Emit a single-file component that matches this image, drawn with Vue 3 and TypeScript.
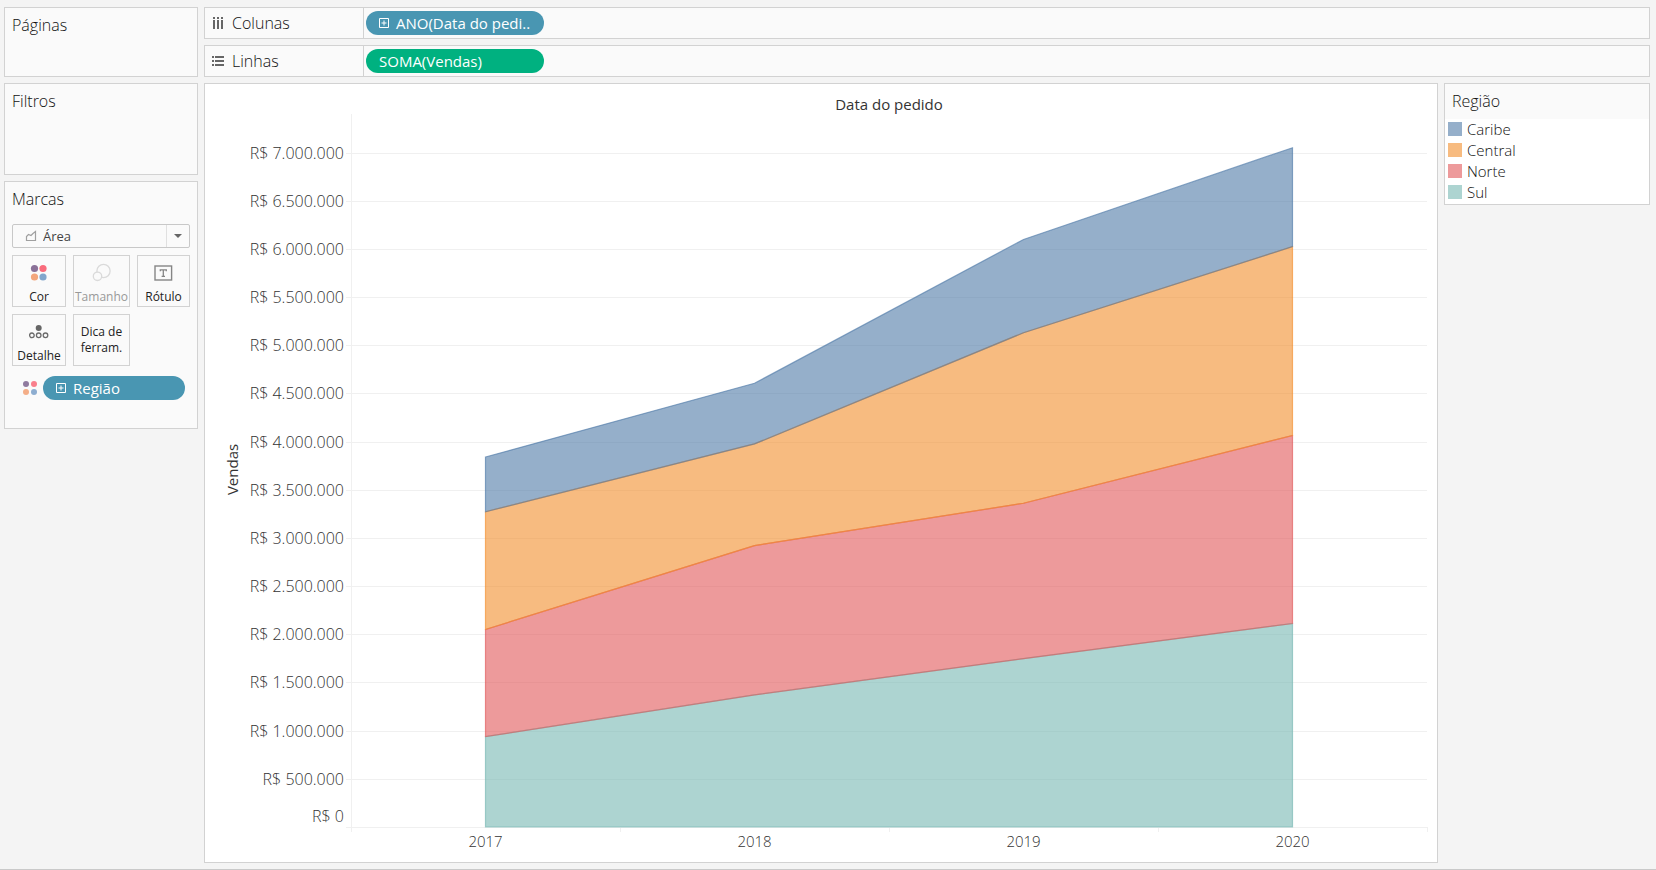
<script setup lang="ts">
import { computed, onBeforeUnmount, onMounted, ref } from 'vue'

interface Series {
  name: string
  color: string
  values: number[]
}

// Sales in millions of R$, listed from the top of the stack to the bottom
const years = [2017, 2018, 2019, 2020]
const series: Series[] = [
  { name: 'Caribe', color: '#4e79a7', values: [0.568, 0.629, 0.968, 1.027] },
  { name: 'Central', color: '#f28e2b', values: [1.222, 1.056, 1.77, 1.96] },
  { name: 'Norte', color: '#e15759', values: [1.112, 1.548, 1.613, 1.951] },
  { name: 'Sul', color: '#76b7b2', values: [0.938, 1.372, 1.747, 2.112] },
]

const chart = ref<HTMLElement | null>(null)
const width = ref(1232)
const height = ref(778)
let observer: ResizeObserver | undefined

function measure() {
  if (!chart.value) return
  width.value = chart.value.clientWidth
  height.value = chart.value.clientHeight
}

onMounted(() => {
  measure()
  observer = new ResizeObserver(measure)
  if (chart.value) observer.observe(chart.value)
})
onBeforeUnmount(() => observer?.disconnect())

const left = 146
const top = 30
const right = computed(() => width.value - 10)
const bottom = computed(() => height.value - 35)
const step = computed(() => (right.value - left) / years.length)

const domainMax = 7.4
const y = (v: number) => bottom.value - (v / domainMax) * (bottom.value - top)
const x = (i: number) => left + step.value * (i + 0.5)
const crisp = (v: number) => Math.round(v) + 0.5

const ticks = Array.from({ length: 15 }, (_, i) => i * 0.5)
const money = (v: number) =>
  'R$ ' + String(Math.round(v * 1e6)).replace(/\B(?=(\d{3})+(?!\d))/g, '.')

const areas = computed(() =>
  series.map((s, k) => {
    const below = years.map((_, i) => series.slice(k + 1).reduce((a, b) => a + b.values[i], 0))
    const upper = years.map((_, i) => `${x(i)},${y(below[i] + s.values[i])}`)
    const lower = years.map((_, i) => `${x(i)},${y(below[i])}`).reverse()
    return { ...s, points: [...upper, ...lower].join(' ') }
  }),
)
// Outlines are painted bottom-up so that each upper series owns its lower edge
const outlines = computed(() => [...areas.value].reverse())
const yAxisTitle = computed(() => `translate(33 ${(top + bottom.value) / 2 - 1}) rotate(-90)`)
</script>

<template>
  <div class="page">
    <aside class="side">
      <section class="card pages"><h2>Páginas</h2></section>
      <section class="card filters"><h2>Filtros</h2></section>
      <section class="card marks">
        <h2>Marcas</h2>
        <div class="mark-type">
          <svg class="area-icon" width="12" height="12" viewBox="0 0 12 12" aria-hidden="true">
            <path d="M1.5 10.5V6.5L3.5 4.5L6 5.5L8 3.5L10.5 1.5V10.5Z" fill="none" stroke="#a0a0a0" stroke-width="1.2" />
          </svg>
          <select aria-label="Tipo de marca"><option>Área</option></select>
          <span class="caret" aria-hidden="true"></span>
        </div>
        <div class="buttons">
          <button type="button">
            <svg width="20" height="20" viewBox="0 0 20 20" aria-hidden="true">
              <circle cx="5.5" cy="5.5" r="3.6" fill="#8a7198" /><circle cx="14" cy="5.5" r="3.6" fill="#f96c7c" />
              <circle cx="5.5" cy="14" r="3.6" fill="#f3a67c" /><circle cx="14" cy="14" r="3.6" fill="#82a6cc" />
            </svg>
            <span>Cor</span>
          </button>
          <button type="button" class="off" disabled>
            <svg width="20" height="20" viewBox="0 0 20 20" fill="#fafafa" stroke="#dadada" stroke-width="1.3" aria-hidden="true">
              <circle cx="11.5" cy="8" r="6.6" /><circle cx="5.5" cy="13.3" r="4.2" />
            </svg>
            <span>Tamanho</span>
          </button>
          <button type="button">
            <svg width="20" height="20" viewBox="0 0 20 20" fill="none" stroke="#858585" aria-hidden="true">
              <rect x="1" y="3" width="16.6" height="14" stroke-width="1.4" />
              <path d="M6.3 8.2V6.8H12.3V8.2M9.3 6.8V13.4M7.6 13.4H11" stroke-width="1.3" />
            </svg>
            <span>Rótulo</span>
          </button>
          <button type="button">
            <svg width="20" height="20" viewBox="0 0 20 20" fill="none" stroke="#6b6b6b" stroke-width="1.3" aria-hidden="true">
              <circle cx="9.7" cy="6" r="3" fill="#666" stroke="none" />
              <circle cx="2.9" cy="13.3" r="2.3" /><circle cx="9.7" cy="13.3" r="2.3" /><circle cx="16.5" cy="13.3" r="2.3" />
            </svg>
            <span>Detalhe</span>
          </button>
          <button type="button" class="tip">Dica de ferram.</button>
        </div>
        <div class="encoding">
          <svg width="14" height="14" viewBox="0 0 14 14" aria-hidden="true">
            <circle cx="3" cy="3" r="3" fill="#907b9f" /><circle cx="11" cy="3" r="3" fill="#f97f8c" />
            <circle cx="3" cy="11" r="3" fill="#f4ae88" /><circle cx="11" cy="11" r="3" fill="#8dadd0" />
          </svg>
          <button type="button" class="pill blue">
            <svg width="10" height="10" viewBox="0 0 10 10" fill="none" stroke="#fff" aria-hidden="true">
              <path d="M.5 .5H9.5V9.5H.5ZM2.5 5H7.5M5 2.5V7.5" />
            </svg>
            <span>Região</span>
          </button>
        </div>
      </section>
    </aside>

    <main class="main">
      <section class="card shelf">
        <h2>
          <svg width="12" height="12" viewBox="0 0 12 12" fill="#666" aria-hidden="true">
            <path d="M1 0h2v2H1zM5 0h2v2H5zM9 0h2v2H9zM1 3h2v9H1zM5 3h2v9H5zM9 3h2v9H9z" />
          </svg>
          Colunas
        </h2>
        <button type="button" class="pill blue">
          <svg width="10" height="10" viewBox="0 0 10 10" fill="none" stroke="#fff" aria-hidden="true">
            <path d="M.5 .5H9.5V9.5H.5ZM2.5 5H7.5M5 2.5V7.5" />
          </svg>
          <span>ANO(Data do pedi..</span>
        </button>
      </section>
      <section class="card shelf">
        <h2>
          <svg width="12" height="12" viewBox="0 0 12 12" fill="#666" aria-hidden="true">
            <path d="M0 1h2v2H0zM0 5h2v2H0zM0 9h2v2H0zM3 1h9v2H3zM3 5h9v2H3zM3 9h9v2H3z" />
          </svg>
          Linhas
        </h2>
        <button type="button" class="pill green"><span>SOMA(Vendas)</span></button>
      </section>

      <div class="work">
        <section ref="chart" class="viz">
          <svg class="chart" :width="width" :height="height" role="img" aria-label="Vendas por data do pedido e região">
            <text class="title" text-anchor="middle" :x="(left + right) / 2" y="26">Data do pedido</text>
            <text class="title" :transform="yAxisTitle" text-anchor="middle">Vendas</text>
            <g class="grid">
              <line v-for="t in ticks" :key="t" :x1="left - 5" :x2="right" :y1="crisp(y(t))" :y2="crisp(y(t))" />
              <line :x1="left + 0.5" :x2="left + 0.5" :y1="top" :y2="bottom" />
              <line
                v-for="i in 5" :key="i" :x1="crisp(left + step * (i - 1))" :x2="crisp(left + step * (i - 1))"
                :y1="bottom" :y2="bottom + 5"
              />
            </g>
            <polygon v-for="a in areas" :key="a.name" :points="a.points" :fill="a.color" fill-opacity="0.6" />
            <polygon
              v-for="a in outlines" :key="a.name" :points="a.points" fill="none"
              :stroke="a.color" stroke-opacity="0.65" stroke-width="1.2"
            />
            <text
              v-for="t in ticks" :key="t" class="label amount" text-anchor="end" :x="left - 7"
              :y="Math.round(y(t)) + (t === 0 ? -5 : 6)"
            >{{ money(t) }}</text>
            <text
              v-for="(year, i) in years" :key="year" class="label" text-anchor="middle" :x="x(i)" :y="bottom + 20"
            >{{ year }}</text>
          </svg>
        </section>
        <aside class="card legend">
          <h2>Região</h2>
          <ul>
            <li v-for="s in series" :key="s.name">
              <i :style="{ background: s.color }"></i>{{ s.name }}
            </li>
          </ul>
        </aside>
      </div>
    </main>
  </div>
</template>

<style>
body {
  margin: 0;
  background: #f4f4f4;
}
</style>

<style scoped>
.page {
  box-sizing: border-box;
  display: flex;
  gap: 6px;
  min-height: 100vh;
  padding: 7px 6px 6px 4px;
  border-bottom: 1px solid #c9c9c9;
  background: #f4f4f4;
  color: #111;
  font: 300 15px/20px "Open Sans", "Noto Sans", sans-serif;
}
.page * {
  box-sizing: border-box;
}
h2 {
  margin: 0;
  font: inherit;
  font-size: 16px;
}
button {
  margin: 0;
  padding: 0;
  border: 0;
  font: inherit;
  color: inherit;
}
.card {
  border: 1px solid #d2d2d2;
  background: #fafafa;
}
.side {
  display: flex;
  flex: none;
  flex-direction: column;
  gap: 6px;
  width: 194px;
}
.side .card {
  padding: 7px;
}
.pages {
  min-height: 70px;
}
.filters {
  min-height: 92px;
}
.marks {
  min-height: 248px;
}
.mark-type {
  display: flex;
  align-items: center;
  position: relative;
  height: 24px;
  margin-top: 15px;
  border: 1px solid #c8c8c8;
  border-radius: 2px;
}
.area-icon {
  position: absolute;
  left: 12px;
  pointer-events: none;
}
select {
  flex: 1;
  height: 22px;
  padding: 0 30px;
  border: 0;
  background: transparent;
  color: #444;
  font: 400 13px/20px "Open Sans", "Noto Sans", sans-serif;
  appearance: none;
}
.caret {
  position: absolute;
  right: 0;
  display: grid;
  place-items: center;
  width: 23px;
  height: 22px;
  border-left: 1px solid #e0e0e0;
  pointer-events: none;
}
.caret::before {
  content: "";
  border: 4px solid transparent;
  border-top-color: #666;
  border-bottom: 0;
}
.buttons {
  display: grid;
  grid-template-columns: 54fr 57fr 53fr;
  gap: 7px;
  margin-top: 7px;
}
.buttons button {
  display: flex;
  flex-direction: column;
  align-items: center;
  justify-content: space-between;
  min-width: 0;
  height: 52px;
  padding: 7px 0 1px;
  border: 1px solid #d2d2d2;
  background: #fafafa;
  color: #222;
  font-size: 12px;
  font-weight: 400;
  line-height: 16px;
}
.buttons .off {
  color: #999;
}
.buttons .tip {
  justify-content: center;
  padding: 0 7px;
}
.encoding {
  display: flex;
  align-items: center;
  gap: 6px;
  margin-top: 10px;
  padding: 0 5px 0 11px;
}
.encoding .pill {
  flex: 1;
}
.pill {
  display: flex;
  align-items: center;
  gap: 7px;
  height: 24px;
  padding: 0 13px;
  border-radius: 12px;
  color: #fff;
  font-weight: 500;
  white-space: nowrap;
}
.blue {
  background: #4996b2;
}
.green {
  background: #00b180;
}
.main {
  display: flex;
  flex: 1;
  flex-direction: column;
  gap: 6px;
  min-width: 0;
}
.shelf {
  display: flex;
  align-items: center;
  height: 32px;
}
.shelf h2 {
  display: flex;
  align-items: center;
  gap: 8px;
  width: 159px;
  height: 30px;
  padding-left: 7px;
  border-right: 1px solid #d2d2d2;
}
.shelf .pill {
  width: 178px;
  margin-left: 2px;
}
.work {
  display: flex;
  flex: 1;
  align-items: flex-start;
  gap: 6px;
}
.viz {
  flex: 1;
  align-self: stretch;
  min-width: 0;
  overflow: hidden;
  border: 1px solid #d2d2d2;
  background: #fff;
}
.chart {
  display: block;
}
.grid {
  stroke: #f0f0f0;
}
.title {
  fill: #333;
  font-weight: 500;
}
.label {
  fill: #333;
}
.amount {
  font-size: 16px;
}
.legend {
  flex: none;
  width: 206px;
}
.legend h2 {
  padding: 7px 7px 8px;
}
ul {
  margin: 0;
  padding: 0 3px 1px;
  background: #fff;
  list-style: none;
}
li {
  display: flex;
  align-items: flex-start;
  gap: 5px;
  height: 21px;
}
li i {
  width: 14px;
  height: 14px;
  margin-top: 3px;
  opacity: 0.6;
}
</style>
